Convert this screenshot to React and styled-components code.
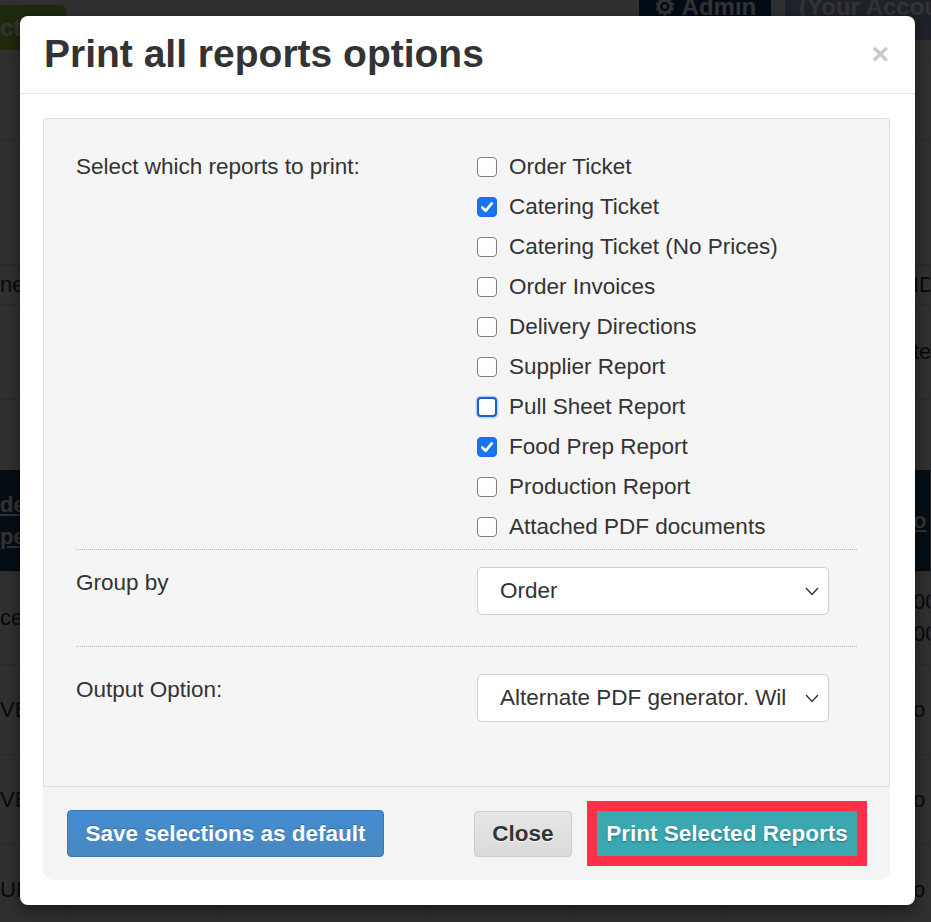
import styled, { createGlobalStyle } from "styled-components";
import { useState } from "react";

const GlobalStyle = createGlobalStyle`
  html, body {
    margin: 0;
    padding: 0;
  }
  body {
    font-family: "Liberation Sans", Arial, sans-serif;
    background: #f1f1f1;
    color: #333;
    overflow: hidden;
  }
  * {
    box-sizing: border-box;
  }
`;

const reportList = [
  { id: "order", name: "Order Ticket" },
  { id: "catering", name: "Catering Ticket" },
  { id: "cateringNoPrice", name: "Catering Ticket (No Prices)" },
  { id: "invoices", name: "Order Invoices" },
  { id: "directions", name: "Delivery Directions" },
  { id: "supplier", name: "Supplier Report" },
  { id: "pull", name: "Pull Sheet Report" },
  { id: "foodprep", name: "Food Prep Report" },
  { id: "production", name: "Production Report" },
  { id: "pdf", name: "Attached PDF documents" },
];

// rows of the page behind the dialog, only their edges show
const bgRows = [
  { h: 82, left: "", right: "" },
  { h: 125, left: "", right: "" },
  { h: 40, left: "ne", right: "ID", lined: true },
  { h: 95, left: "", right: "te" },
  { h: 70, left: "", right: "", plain: true },
  { h: 102, left: ["de", "pe"], right: "o", dark: true },
  { h: 93, left: "ce", right: ["00", "00"] },
  { h: 90, left: "VE", right: "o" },
  { h: 90, left: "VE", right: "o" },
  { h: 90, left: "UR", right: "o" },
];

const Chevron = () => (
  <svg width="14" height="9" viewBox="0 0 14 9">
    <polyline points="1,1 7,7.5 13,1" fill="none" stroke="#333" strokeWidth="1.4" />
  </svg>
);

const CheckMark = () => (
  <svg width="14" height="14" viewBox="0 0 14 14">
    <polyline
      points="2.2,7.4 5.6,10.8 11.8,3.4"
      fill="none"
      stroke="#fff"
      strokeWidth="2.6"
      strokeLinecap="round"
      strokeLinejoin="round"
    />
  </svg>
);

const App = () => {
  const [checked, setChecked] = useState({ catering: true, foodprep: true });

  const toggle = (id) => {
    setChecked((prev) => ({ ...prev, [id]: !prev[id] }));
  };

  const renderBgCell = (value, bold) => {
    if (Array.isArray(value)) {
      return value.map((v, i) => (
        <BgText key={i} $bold={bold}>
          {v}
        </BgText>
      ));
    }
    return <BgText $bold={bold}>{value}</BgText>;
  };

  return (
    <Page>
      <GlobalStyle />
      <TopBar>
        <GreenButton>ct</GreenButton>
        <TopSpacer />
        <AdminButton>⚙ Admin</AdminButton>
        <AccountButton>(Your Account)</AccountButton>
      </TopBar>
      {bgRows.map((row, i) => (
        <BgRow key={i} $h={row.h} $dark={row.dark} $lined={row.lined} $plain={row.plain}>
          <BgCell $align="left">{renderBgCell(row.left, row.dark)}</BgCell>
          <BgCell />
          <BgCell />
          <BgCell />
          <BgCell />
          <BgCell />
          <BgCell $align="right">{renderBgCell(row.right, row.dark)}</BgCell>
        </BgRow>
      ))}

      <Backdrop />

      <Modal>
        <Header>
          <Title>Print all reports options</Title>
          <CloseX>×</CloseX>
        </Header>
        <Body>
          <Well>
            <OptionRow>
              <ListLabel>Select which reports to print:</ListLabel>
              <CheckList>
                {reportList.map((r) => (
                  <CheckRow key={r.id} onClick={() => toggle(r.id)}>
                    <Box $checked={checked[r.id]} $focused={r.id === "pull"}>
                      {checked[r.id] && <CheckMark />}
                    </Box>
                    {r.name}
                  </CheckRow>
                ))}
              </CheckList>
            </OptionRow>
            <Separator $top={2} />
            <OptionRow $top={17}>
              <FieldLabel>Group by</FieldLabel>
              <SelectBox>
                <span>Order</span>
                <Chevron />
              </SelectBox>
            </OptionRow>
            <Separator $top={31} />
            <OptionRow $top={27}>
              <FieldLabel>Output Option:</FieldLabel>
              <SelectBox>
                <span>Alternate PDF generator. Wil</span>
                <Chevron />
              </SelectBox>
            </OptionRow>
          </Well>
          <Footer>
            <SaveButton>Save selections as default</SaveButton>
            <FooterSpacer />
            <CloseButton>Close</CloseButton>
            <PrintButton>Print Selected Reports</PrintButton>
          </Footer>
        </Body>
      </Modal>
    </Page>
  );
};

const Page = styled.div`
  position: relative;
  width: 931px;
  height: 922px;
  overflow: hidden;
  background: #f1f1f1;
`;

const TopBar = styled.div`
  display: flex;
  align-items: flex-start;
  height: 58px;
  border-bottom: 1px solid #ddd;
`;

const GreenButton = styled.div`
  margin-top: 5px;
  width: 67px;
  height: 45px;
  background: #96cf42;
  border-radius: 0 8px 8px 0;
  color: #fff;
  font-weight: bold;
  font-size: 24px;
  line-height: 45px;
`;

const TopSpacer = styled.div`
  flex: 1;
`;

const AdminButton = styled.div`
  width: 132px;
  height: 40px;
  background: #0a3c6e;
  color: #fff;
  font-weight: bold;
  font-size: 24px;
  line-height: 14px;
  text-align: center;
`;

const AccountButton = styled.div`
  margin-left: 14px;
  width: 146px;
  height: 40px;
  padding-left: 14px;
  background: #9aaac7;
  color: #fff;
  font-weight: bold;
  font-size: 24px;
  line-height: 14px;
  white-space: nowrap;
  overflow: hidden;
`;

const BgRow = styled.div`
  display: grid;
  grid-template-columns: 68px 149px 212px 141px 156px 157px 1fr;
  height: ${(p) => p.$h}px;
  background: ${(p) => (p.$dark ? "#1a426a" : "transparent")};
  border-bottom: 1px solid ${(p) => (p.$plain ? "transparent" : "#d6d6d6")};
  border-top: ${(p) => (p.$lined ? "1px solid #d6d6d6" : "none")};
`;

const BgCell = styled.div`
  display: flex;
  flex-direction: column;
  justify-content: center;
  align-items: flex-start;
  padding-left: ${(p) => (p.$align === "right" ? "30px" : "0")};
  border-right: 1px solid #e2e2e2;
  font-size: 22px;
  line-height: 32px;
  color: #333;
  white-space: nowrap;
  overflow: hidden;
`;

const BgText = styled.span`
  color: ${(p) => (p.$bold ? "#fff" : "#333")};
  font-weight: ${(p) => (p.$bold ? "bold" : "normal")};
  text-decoration: ${(p) => (p.$bold ? "underline" : "none")};
`;

const Backdrop = styled.div`
  position: absolute;
  inset: 0;
  background: rgba(0, 0, 0, 0.8);
`;

const Modal = styled.div`
  position: absolute;
  top: 16px;
  left: 20px;
  width: 895px;
  background: #fff;
  border-radius: 8px;
  box-shadow: 0 5px 15px rgba(0, 0, 0, 0.5);
`;

const Header = styled.div`
  display: flex;
  align-items: center;
  justify-content: space-between;
  padding: 16px 26px 18px 24px;
  border-bottom: 1px solid #e5e5e5;
`;

const Title = styled.h1`
  margin: 0;
  font-size: 39px;
  line-height: 43px;
  font-weight: bold;
  color: #333;
`;

const CloseX = styled.span`
  font-size: 30px;
  font-weight: bold;
  line-height: 30px;
  color: #c9c9c9;
  cursor: pointer;
`;

const Body = styled.div`
  padding: 24px 25px 25px 23px;
`;

const Well = styled.div`
  padding: 28px 32px 64px;
  background: #f5f5f5;
  border: 1px solid #dcdcdc;
  border-radius: 4px 4px 0 0;
`;

const OptionRow = styled.div`
  display: grid;
  grid-template-columns: 401px 1fr;
  margin-top: ${(p) => p.$top || 0}px;
`;

const ListLabel = styled.div`
  font-size: 22.5px;
  line-height: 40px;
  color: #333;
`;

const FieldLabel = styled.div`
  padding-top: 3px;
  font-size: 22.5px;
  line-height: 26px;
  color: #333;
`;

const CheckList = styled.div`
  display: flex;
  flex-direction: column;
`;

const CheckRow = styled.label`
  display: flex;
  align-items: center;
  gap: 12px;
  height: 40px;
  font-size: 22.5px;
  color: #333;
  cursor: pointer;
`;

const Box = styled.span`
  display: flex;
  align-items: center;
  justify-content: center;
  flex-shrink: 0;
  width: 20px;
  height: 20px;
  border-radius: 4px;
  background: ${(p) => (p.$checked ? "#1a73f0" : "#fff")};
  border: ${(p) =>
    p.$checked
      ? "1px solid #1a6ee6"
      : p.$focused
      ? "2.5px solid #1462d2"
      : "1px solid #7d7d7d"};
  box-shadow: ${(p) => (p.$focused ? "0 0 0 1.5px rgba(20, 98, 210, 0.22)" : "none")};
`;

const Separator = styled.div`
  margin-top: ${(p) => p.$top}px;
  border-top: 1px dotted #b9b9b9;
`;

const SelectBox = styled.div`
  display: flex;
  align-items: center;
  justify-content: space-between;
  width: 352px;
  height: 48px;
  padding: 0 9px 0 22px;
  background: #fff;
  border: 1px solid #cfcfcf;
  border-radius: 5px;
  font-size: 22.5px;
  color: #333;
  white-space: nowrap;
  overflow: hidden;
`;

const Footer = styled.div`
  display: flex;
  align-items: center;
  height: 93px;
  padding: 0 33px 0 24px;
  background: #f4f4f4;
  border-radius: 0 0 10px 10px;
`;

const FooterSpacer = styled.div`
  flex: 1;
`;

const BaseButton = styled.button`
  font-family: "Liberation Sans", Arial, sans-serif;
  font-size: 22.5px;
  font-weight: bold;
  border-radius: 4px;
  cursor: pointer;
  padding: 0;
  white-space: nowrap;
`;

const SaveButton = styled(BaseButton)`
  width: 317px;
  height: 47px;
  color: #fff;
  background: linear-gradient(#428dd3, #4a88bf);
  border: 1px solid #3b77b1;
  text-shadow: 0 -1px 0 rgba(0, 0, 0, 0.25);
`;

const CloseButton = styled(BaseButton)`
  width: 98px;
  height: 46px;
  color: #333;
  background: linear-gradient(#e6e6e6, #dadada);
  border: 1px solid #cdcdcd;
  text-shadow: 0 1px 0 #fff;
`;

const PrintButton = styled(BaseButton)`
  margin-left: 25px;
  width: 260px;
  height: 45px;
  color: #fff;
  background: #3aa7b1;
  border: none;
  border-radius: 0;
  outline: 10px solid #ff2f48;
  text-shadow: 0 1px 2px rgba(0, 0, 0, 0.35);
`;

export default App;
